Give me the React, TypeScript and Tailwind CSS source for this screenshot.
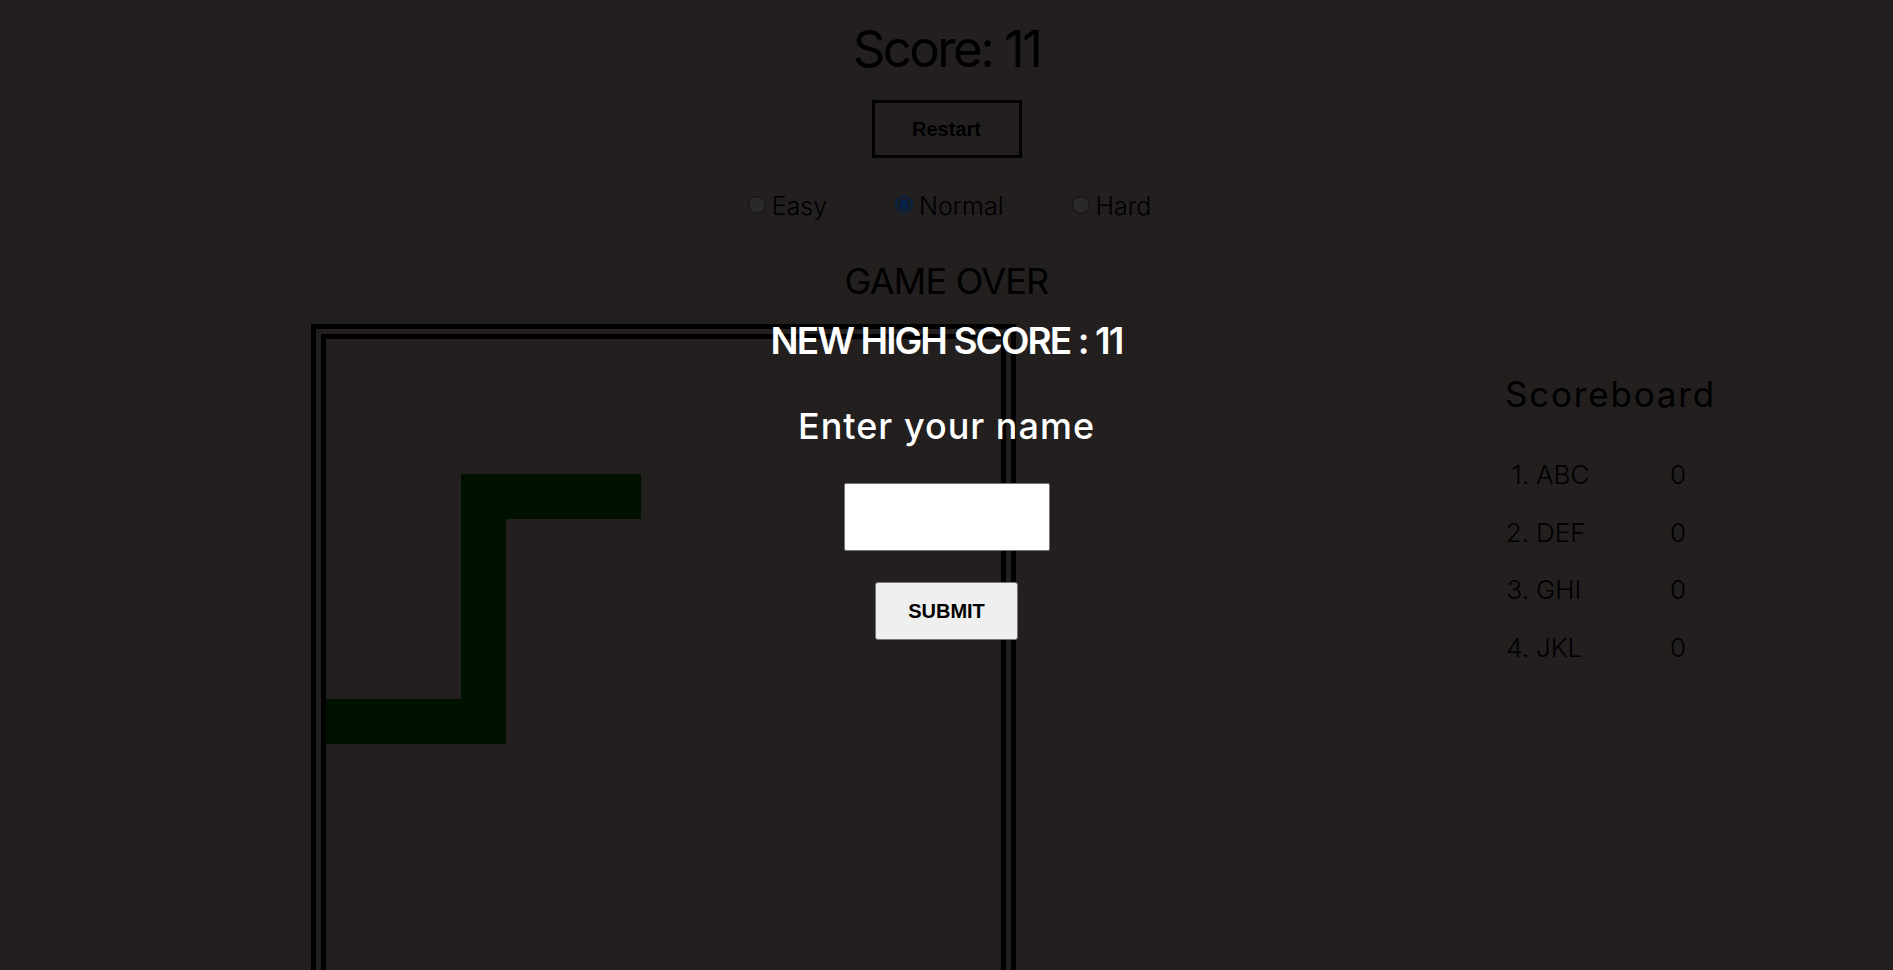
import React from "react";

const snake: [number, number][] = [
  [3, 3], [4, 3], [5, 3], [6, 3],
  [3, 4], [3, 5], [3, 6], [3, 7], [3, 8],
  [0, 8], [1, 8], [2, 8],
];

const scores = [
  ["1.", "ABC", "0"],
  ["2.", "DEF", "0"],
  ["3.", "GHI", "0"],
  ["4.", "JKL", "0"],
];

function Radio({ label, checked }: { label: string; checked?: boolean }) {
  return (
    <div className="flex items-start gap-[6px]">
      {checked ? (
        <div className="mt-[2px] flex h-[18px] w-[18px] items-center justify-center rounded-full border-2 border-[#0a2446] bg-[#1c1a1a]">
          <div className="h-[10px] w-[10px] rounded-full bg-[#06224a]" />
        </div>
      ) : (
        <div className="mt-[2px] h-[18px] w-[18px] rounded-full border border-[#111] bg-[#2a2828]" />
      )}
      <span className="text-[25px] font-light leading-none text-black">{label}</span>
    </div>
  );
}

export default function App() {
  return (
    <div
      className="relative h-screen w-full overflow-hidden bg-[#221f1e]"
      style={{ fontFamily: "Inter, 'Noto Sans', sans-serif" }}
    >
      <div className="flex flex-col items-center">
        <h1 className="mt-[23px] text-[51px] font-normal leading-none tracking-[-2.6px] text-black">Score: 11</h1>
        <button
          className="mt-[26px] h-[58px] w-[150px] border-[3px] border-black text-[20px] font-bold text-black"
          style={{ fontFamily: "'Liberation Sans', Arial, sans-serif" }}
        >
          Restart
        </button>
        <div className="mt-[36px] flex gap-[68px] pl-[6px]">
          <Radio label="Easy" />
          <Radio label="Normal" checked />
          <Radio label="Hard" />
        </div>
        <h2 className="mt-[44px] text-[36px] font-normal leading-none tracking-[-0.8px] text-black">GAME OVER</h2>
      </div>

      <div className="mt-[25px] flex items-start">
        <div className="ml-[311px] h-[705px] w-[705px] shrink-0 border-[15px] border-double border-black">
          <div className="grid grid-cols-[repeat(15,45px)] grid-rows-[repeat(15,45px)]">
            {snake.map(([c, r], i) => (
              <div
                key={i}
                className="bg-[#001100]"
                style={{ gridColumn: c + 1, gridRow: r + 1 }}
              />
            ))}
          </div>
        </div>
        <div className="ml-[489px] mt-[53px] text-black">
          <h3 className="text-[35px] font-normal leading-none tracking-[1.8px]">Scoreboard</h3>
          <div className="mt-[34px]">
            {scores.map(([n, name, s]) => (
              <div key={n} className="grid grid-cols-[165px_auto] text-[26px] font-light leading-[57.67px]">
                <span className="flex">
                  <span className="inline-block w-[24px] text-right">{n}</span>
                  <span className="ml-[7px]">{name}</span>
                </span>
                <span>{s}</span>
              </div>
            ))}
          </div>
        </div>
      </div>

      <div className="absolute inset-0 flex flex-col items-center">
        <div className="mt-[322px] text-[37px] font-semibold leading-none tracking-[-1.9px] text-white">NEW HIGH SCORE : 11</div>
        <div className="mt-[49px] text-[36px] font-medium leading-none tracking-[1px] text-white">Enter your name</div>
        <input
          type="text"
          className="mt-[39px] h-[68px] w-[206px] rounded-[2px] border border-[#767676] bg-white outline-none"
        />
        <button
          className="mt-[31px] h-[58px] w-[143px] rounded-[3px] border border-[#767676] bg-[#efefef] text-[20px] font-bold text-black"
          style={{ fontFamily: "'Liberation Sans', Arial, sans-serif" }}
        >
          SUBMIT
        </button>
      </div>
    </div>
  );
}
